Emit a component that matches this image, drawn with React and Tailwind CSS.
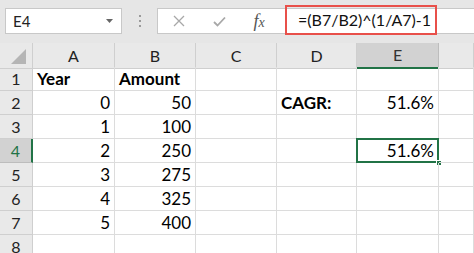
import React from "react";

const cols = ["A", "B", "C", "D", "E", ""];

const rows = [
  { n: 1, cells: [{ t: "Year", b: true }, { t: "Amount", b: true }, {}, {}, {}, {}] },
  { n: 2, cells: [{ t: "0", r: true }, { t: "50", r: true }, {}, { t: "CAGR:", b: true }, { t: "51.6%", r: true }, {}] },
  { n: 3, cells: [{ t: "1", r: true }, { t: "100", r: true }, {}, {}, {}, {}] },
  { n: 4, cells: [{ t: "2", r: true }, { t: "250", r: true }, {}, {}, { t: "51.6%", r: true, sel: true }, {}] },
  { n: 5, cells: [{ t: "3", r: true }, { t: "275", r: true }, {}, {}, {}, {}] },
  { n: 6, cells: [{ t: "4", r: true }, { t: "325", r: true }, {}, {}, {}, {}] },
  { n: 7, cells: [{ t: "5", r: true }, { t: "400", r: true }, {}, {}, {}, {}] },
  { n: 8, cells: [{}, {}, {}, {}, {}, {}] },
];

const Toolbar = () => (
  <div className="relative h-[43px] bg-[#e6e6e6] flex items-start pt-[8px] pl-[5px]">
    {/* Name box */}
    <div className="w-[117px] h-[26px] bg-white border border-[#c8c8c8] flex items-center justify-between pl-[7px] pr-[8px]">
      <span className="text-[15px] text-[#222] leading-none">E4</span>
      <svg width="7" height="4" viewBox="0 0 7 4">
        <path d="M0 0h7L3.5 4z" fill="#666" />
      </svg>
    </div>
    {/* grip dots */}
    <div className="w-[35px] h-[26px] flex flex-col items-center justify-center gap-[3px]">
      <span className="w-[2px] h-[2px] bg-[#9a9a9a]" />
      <span className="w-[2px] h-[2px] bg-[#9a9a9a]" />
      <span className="w-[2px] h-[2px] bg-[#9a9a9a]" />
    </div>
    {/* formula bar */}
    <div className="flex-1 h-[26px] bg-white border-y border-l border-[#c8c8c8] flex items-center">
      <div className="w-[41px] flex justify-center">
        <svg width="12" height="12" viewBox="0 0 12 12">
          <path d="M1 1L11 11M11 1L1 11" stroke="#a8a8a8" strokeWidth="1.3" />
        </svg>
      </div>
      <div className="w-[41px] flex justify-center">
        <svg width="13" height="11" viewBox="0 0 13 11">
          <path d="M1 6L4.5 9.5L12 1.5" stroke="#a8a8a8" strokeWidth="1.8" fill="none" />
        </svg>
      </div>
      <div className="w-[38px] flex justify-center">
        <span className="italic text-[18px] text-[#555] leading-none" style={{ fontFamily: "'Liberation Serif', serif" }}>
          f<span className="text-[14px]">x</span>
        </span>
      </div>
    </div>
    {/* highlighted formula */}
    <div className="absolute left-[285px] top-[5px] w-[152px] h-[30px] border-2 border-[#e8504a] flex items-center pl-[11px]">
      <span className="text-[16px] text-[#111] leading-none">=(B7/B2)^(1/A7)-1</span>
    </div>
  </div>
);

export default function App() {
  return (
    <div className="w-[474px] h-[253px] overflow-hidden bg-white" style={{ fontFamily: "Lato, 'Noto Sans', sans-serif" }}>
      <Toolbar />
      <div className="grid grid-cols-[33px_82px_81px_81px_80px_82px_1fr] auto-rows-[24px]">
        {/* header row */}
        <div className="h-[26px] bg-[#e9e9e9] border-r border-b border-[#cfcfcf] relative">
          <svg className="absolute right-[6px] bottom-[4px]" width="15" height="15" viewBox="0 0 15 15">
            <path d="M15 0V15H0z" fill="#b5b5b5" />
          </svg>
        </div>
        {cols.map((c, i) => (
          <div
            key={i}
            className={
              c === "E"
                ? "h-[26px] bg-[#d2d2d2] border-r border-[#bdbdbd] border-b-2 border-b-[#217346] flex items-center justify-center text-[16px] text-[#333]"
                : "h-[26px] bg-[#e9e9e9] border-r border-b border-[#cfcfcf] flex items-center justify-center text-[16px] text-[#222]"
            }
          >
            {c}
          </div>
        ))}
        {rows.map((row) => (
          <React.Fragment key={row.n}>
            <div
              className={
                row.n === 4
                  ? "bg-[#d2d2d2] border-r-2 border-r-[#217346] border-b border-[#bdbdbd] flex items-center justify-center text-[16px] text-[#217346]"
                  : "bg-[#e9e9e9] border-r border-b border-[#cfcfcf] flex items-center justify-center text-[16px] text-[#222]"
              }
            >
              {row.n}
            </div>
            {row.cells.map((cell, i) => (
              <div
                key={i}
                className={
                  "relative border-r border-b border-[#dcdcdc] flex items-center px-[4px] text-[17px] text-black " +
                  (cell.r ? "justify-end " : "justify-start ") +
                  (cell.b ? "font-bold" : "")
                }
              >
                {cell.t}
                {cell.sel && (
                  <>
                    <div className="absolute -left-[1px] -top-[1px] -right-[1px] -bottom-[1px] border-2 border-[#217346]" />
                    <div className="absolute -right-[4px] -bottom-[4px] w-[6px] h-[6px] bg-[#217346] border border-white" />
                  </>
                )}
              </div>
            ))}
          </React.Fragment>
        ))}
      </div>
    </div>
  );
}
